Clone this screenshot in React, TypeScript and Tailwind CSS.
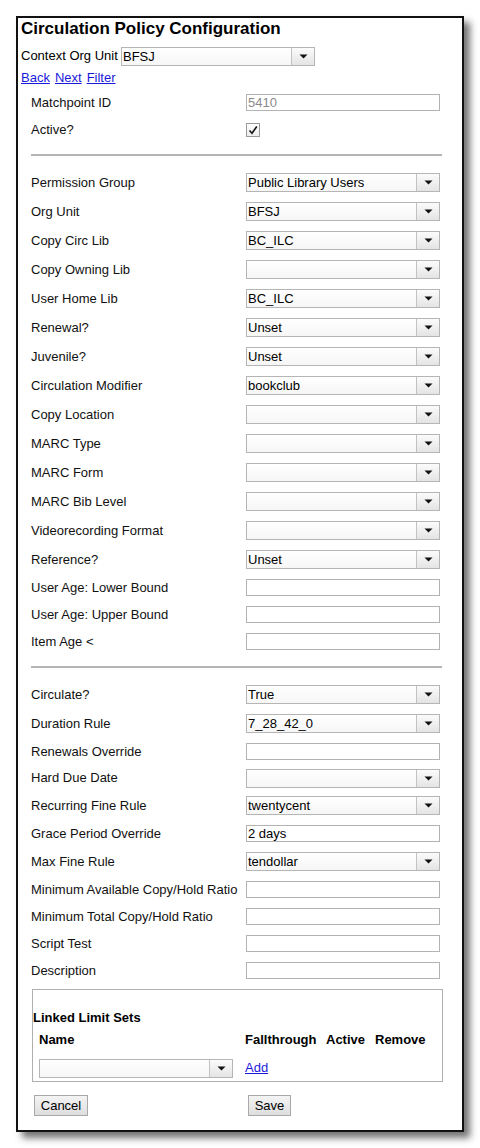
import type { ReactNode } from "react";

const font = { fontFamily: '"Liberation Sans", Arial, sans-serif' };

function Arrow() {
  return (
    <svg width="9" height="5" viewBox="0 0 9 5" className="block">
      <path d="M0.5 0.5 L8.5 0.5 L4.5 4.5 Z" fill="#111" />
    </svg>
  );
}

function Select({ value = "" }: { value?: string }) {
  return (
    <div className="flex h-[19px] w-[194px] border border-[#b5b5b5] bg-white">
      <div className="flex-1 overflow-hidden bg-gradient-to-b from-white to-[#f6f6f6] pl-px text-[13px] leading-[17px] text-black">
        {value}
      </div>
      <div className="flex w-[23px] items-center justify-center border-l border-[#c2c2c2] bg-gradient-to-b from-[#fbfbfb] to-[#e4e4e4]">
        <Arrow />
      </div>
    </div>
  );
}

function TextInput({ value = "", disabled }: { value?: string; disabled?: boolean }) {
  return (
    <div
      className={`h-[17px] w-[194px] border border-[#b3b3b3] bg-white pl-px text-[13px] leading-[15px] ${
        disabled ? "text-[#8a8a8a]" : "text-black"
      }`}
    >
      {value}
    </div>
  );
}

function Row({ label, h, children }: { label: string; h: "sel" | "txt" | "short"; children: ReactNode }) {
  const height = h === "sel" ? "h-[29px]" : h === "txt" ? "h-[27px]" : "h-[26px]";
  return (
    <div className={`flex items-center ${height}`}>
      <div className="w-[215px] text-[13px] text-[#111]">{label}</div>
      {children}
    </div>
  );
}

function Rule() {
  return <div className="mb-[12px] mt-[11px] h-[2px] w-[411px] bg-[#b4b4b4]" />;
}

const selects1: [string, string][] = [
  ["Permission Group", "Public Library Users"],
  ["Org Unit", "BFSJ"],
  ["Copy Circ Lib", "BC_ILC"],
  ["Copy Owning Lib", ""],
  ["User Home Lib", "BC_ILC"],
  ["Renewal?", "Unset"],
  ["Juvenile?", "Unset"],
  ["Circulation Modifier", "bookclub"],
  ["Copy Location", ""],
  ["MARC Type", ""],
  ["MARC Form", ""],
  ["MARC Bib Level", ""],
  ["Videorecording Format", ""],
  ["Reference?", "Unset"],
];

function Button({ children, w }: { children: ReactNode; w: string }) {
  return (
    <div
      className={`flex h-[21px] items-center justify-center border border-[#a9a9a9] bg-gradient-to-b from-[#f4f4f4] to-[#dedede] text-[13px] text-black ${w}`}
    >
      {children}
    </div>
  );
}

export default function App() {
  return (
    <div className="min-h-[1148px] bg-white pl-[16px] pt-[16px]" style={font}>
      <div className="w-[448px] border-2 border-[#111] bg-white pb-[14px] shadow-[6px_6px_7px_rgba(0,0,0,0.55)]">
        <div className="h-[22px] pl-[3px] text-[17px] font-bold leading-[22px] text-black">
          Circulation Policy Configuration
        </div>
        <div className="mt-[6px] flex h-[20px] items-center pl-[3px]">
          <div className="w-[100px] text-[13px] text-black">Context Org Unit</div>
          <Select value="BFSJ" />
        </div>
        <div className="flex h-[23px] items-center gap-[5px] pl-[3px] text-[13px] text-[#1a1adb]">
          <span className="underline">Back</span>
          <span className="underline">Next</span>
          <span className="underline">Filter</span>
        </div>

        <div className="pl-[13px]">
          <Row label="Matchpoint ID" h="txt">
            <TextInput value="5410" disabled />
          </Row>
          <Row label="Active?" h="txt">
            <div className="flex h-[14px] w-[14px] items-center justify-center border border-[#9a9a9a] bg-gradient-to-b from-white to-[#ececec]">
              <svg width="10" height="10" viewBox="0 0 10 10">
                <path d="M1.5 5.5 L4 8.2 L8.8 1.5" fill="none" stroke="#111" strokeWidth="1.6" />
              </svg>
            </div>
          </Row>
          <Rule />
          {selects1.map(([l, v]) => (
            <Row key={l} label={l} h="sel">
              <Select value={v} />
            </Row>
          ))}
          <Row label="User Age: Lower Bound" h="txt">
            <TextInput />
          </Row>
          <Row label="User Age: Upper Bound" h="txt">
            <TextInput />
          </Row>
          <Row label="Item Age <" h="txt">
            <TextInput />
          </Row>
          <Rule />
          <Row label="Circulate?" h="sel">
            <Select value="True" />
          </Row>
          <Row label="Duration Rule" h="sel">
            <Select value="7_28_42_0" />
          </Row>
          <Row label="Renewals Override" h="txt">
            <TextInput />
          </Row>
          <Row label="Hard Due Date" h="short">
            <Select />
          </Row>
          <Row label="Recurring Fine Rule" h="sel">
            <Select value="twentycent" />
          </Row>
          <Row label="Grace Period Override" h="txt">
            <TextInput value="2 days" />
          </Row>
          <Row label="Max Fine Rule" h="sel">
            <Select value="tendollar" />
          </Row>
          <Row label="Minimum Available Copy/Hold Ratio" h="txt">
            <TextInput />
          </Row>
          <Row label="Minimum Total Copy/Hold Ratio" h="txt">
            <TextInput />
          </Row>
          <Row label="Script Test" h="txt">
            <TextInput />
          </Row>
          <Row label="Description" h="txt">
            <TextInput />
          </Row>

          <div className="ml-px mt-[5px] w-[411px] border border-[#b0b0b0] pb-[3px] pt-[18px]">
            <div className="flex h-[20px] items-center text-[13px] font-bold text-black">Linked Limit Sets</div>
            <div className="mt-[2px] flex h-[20px] items-center pl-[6px] text-[13px] font-bold text-black">
              <div className="w-[206px]">Name</div>
              <div className="w-[81px]">Fallthrough</div>
              <div className="w-[49px]">Active</div>
              <div>Remove</div>
            </div>
            <div className="mt-[8px] flex h-[20px] items-center pl-[6px]">
              <div className="w-[206px]">
                <Select />
              </div>
              <span className="text-[13px] text-[#1a1adb] underline">Add</span>
            </div>
          </div>

          <div className="mt-[13px] flex">
            <div className="w-[217px] pl-[3px]">
              <Button w="w-[54px]">Cancel</Button>
            </div>
            <Button w="w-[43px]">Save</Button>
          </div>
        </div>
      </div>
    </div>
  );
}
